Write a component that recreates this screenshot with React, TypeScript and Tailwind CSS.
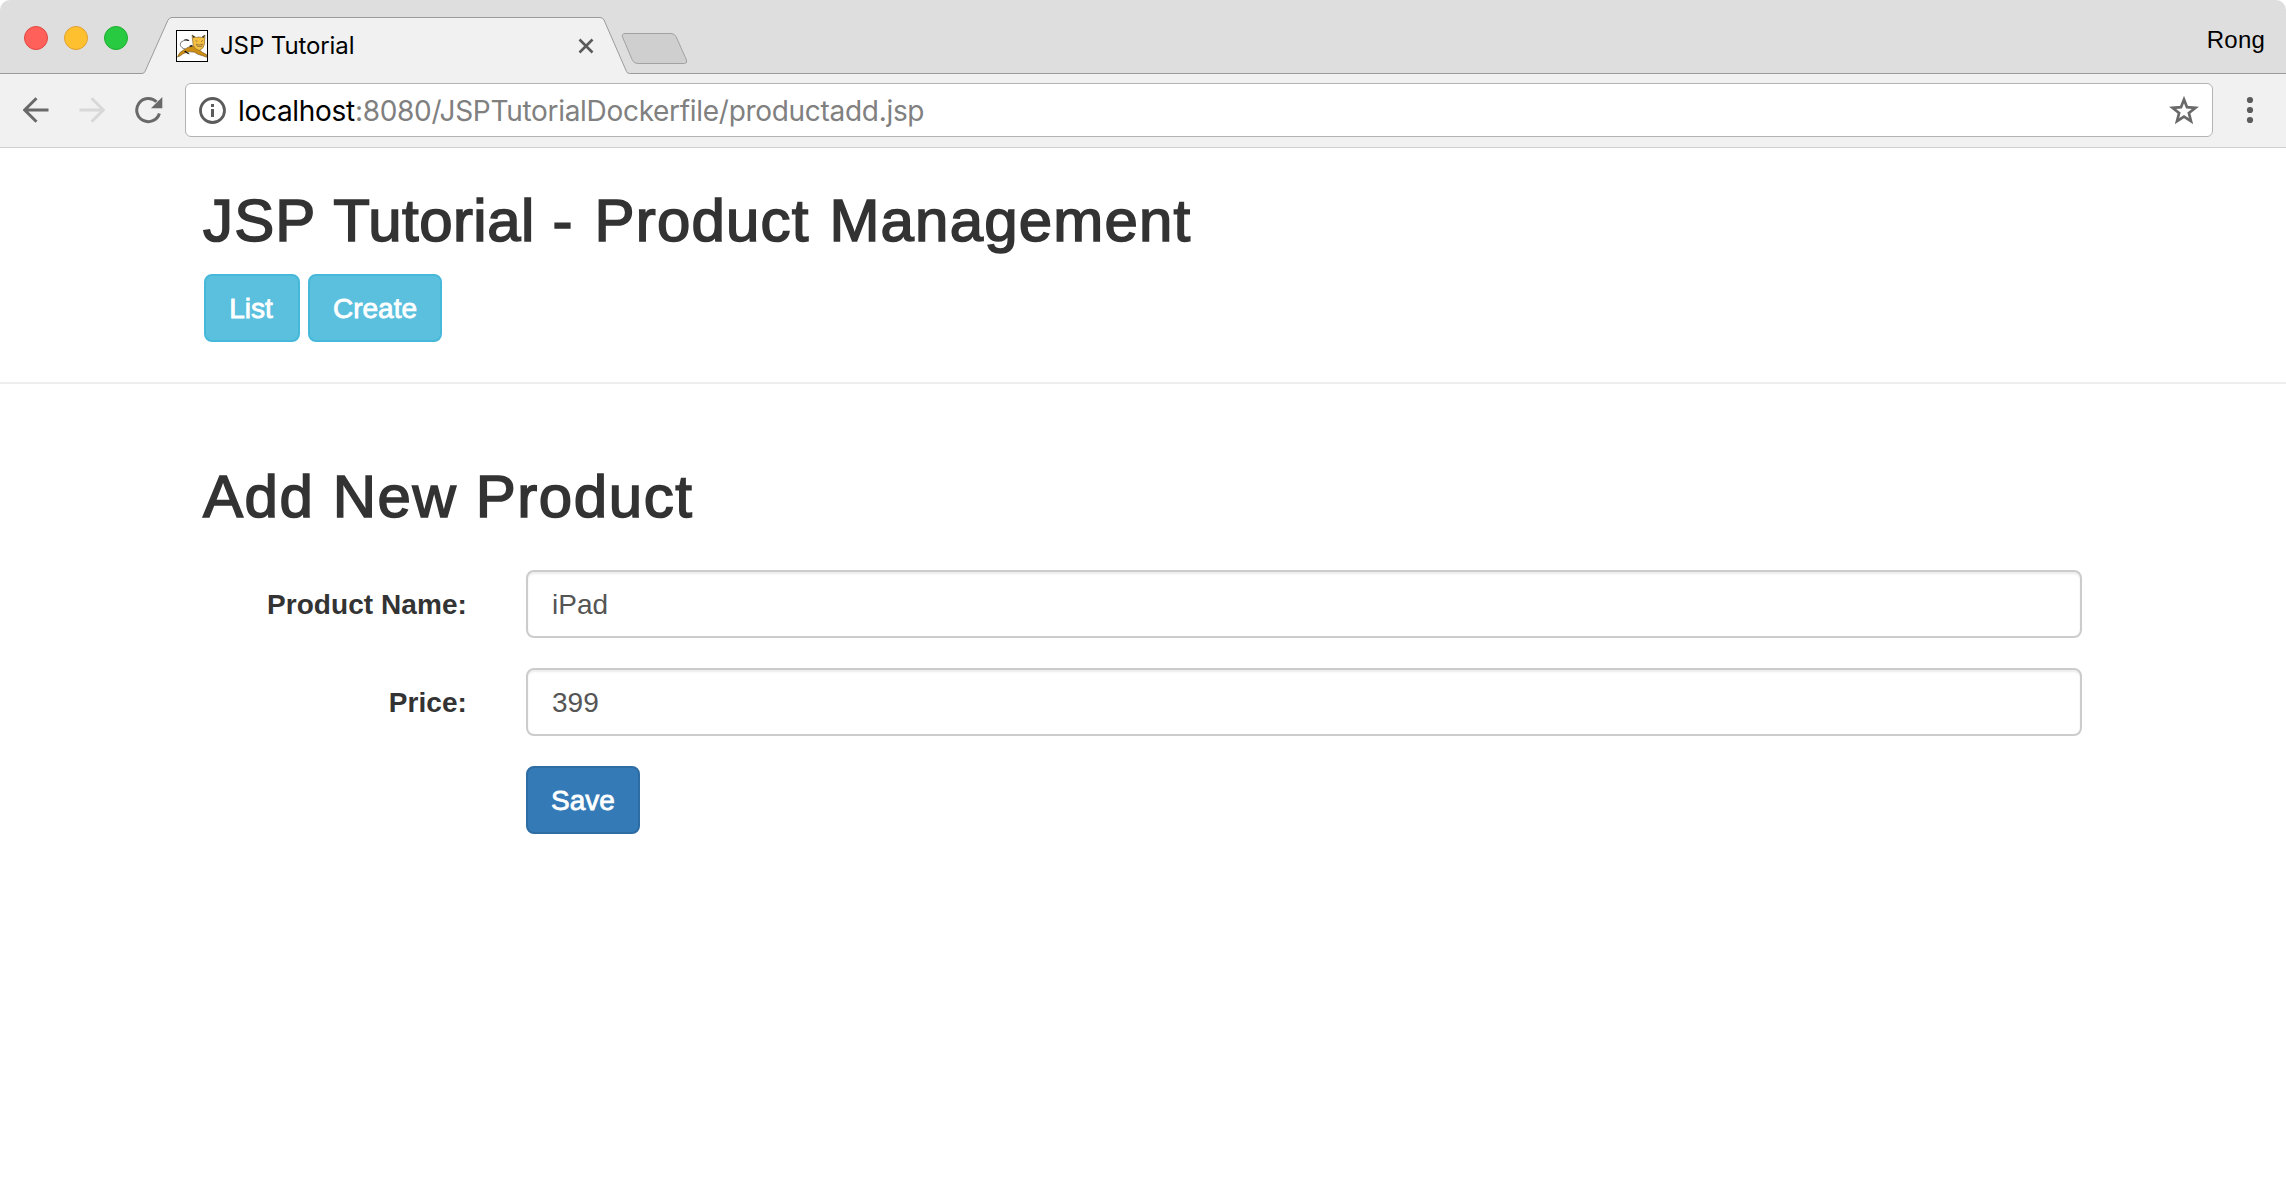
import React from "react";

function TabStrip() {
  return (
    <div className="relative flex h-[74px] items-start overflow-hidden rounded-t-[10px] bg-[#dedede]">
      <div className="flex gap-4 pt-[26px] pl-6">
        <span className="size-6 rounded-full border border-[#e2463f] bg-[#ff605a]" />
        <span className="size-6 rounded-full border border-[#e0a030] bg-[#ffc02f]" />
        <span className="size-6 rounded-full border border-[#1dad2c] bg-[#28ca41]" />
      </div>
      <svg className="absolute inset-0" width="2286" height="74" viewBox="0 0 2286 74" fill="none">
        <path
          d="M-1 73.5H142q2 0 3-2L168 20q1.500-2.500 4-2.500H600q3 0 4 2.500L626.500 71.500q1 2 3 2H2287V75H-1z"
          fill="#f1f1f1"
          stroke="#9b9b9b"
        />
        <path
          d="M625 33.500H671q3.500 0 5 3L686.500 60q1 3.500-2 3.500H638q-4 0-5.500-3L622.500 37q-1-3.500 2.500-3.500z"
          fill="#cfcfcf"
          stroke="#a2a2a2"
        />
      </svg>
      <div className="relative ml-[48px] flex w-[460px] items-center pt-[30px]">
        <TomcatIcon />
        <span className="ml-3 font-[Inter,sans-serif] text-[24px] leading-8 tracking-[-0.1px] text-black">JSP Tutorial</span>
        <svg className="ml-auto mr-[42px]" width="16" height="16" viewBox="0 0 16 16" stroke="#5a5a5a" strokeWidth="2.600">
          <path d="M1.500 1.500l13 13M14.500 1.500l-13 13" />
        </svg>
      </div>
      <span className="ml-auto pt-[24px] pr-[21px] font-['Liberation_Sans',sans-serif] text-[24px] leading-8 tracking-[0.2px] text-black">Rong</span>
    </div>
  );
}

function TomcatIcon() {
  return (
    <svg width="32" height="32" viewBox="0 0 32 32">
      <rect x=".5" y=".5" width="31" height="31" fill="#fff" stroke="#000" />
      <path d="M9 19C4 18 3 13 6 11.500c2-1.300 4-1.500 6-1" fill="none" stroke="#555" strokeWidth=".8" />
      <path d="M7.500 10q3-1.600 6 .3l-1 .8q-2-1-5-1.100z" fill="#111" />
      <path d="M1.500 27q1.500-5 6-7Q12 16.500 17 16l5.500 3q3 3.500 8 5.500l.3 2.700-4.300-1.500q-5-1-8-3.500-5-1-9 .5Q6 24 4 26z" fill="#cf8f14" stroke="#6b5326" strokeWidth=".6" />
      <path d="M8 21.500l4 2.500 2 .3-4.500-3.500zM13 16l2.500-1 1.500 1-2.500 1z" fill="#111" />
      <path d="M16 5l4 2.500q3-1 5.500 0L29 5l-.5 9q-.8 4.500-5 6.500-4.500-.6-6.300-5z" fill="#f6c043" stroke="#70551b" strokeWidth=".6" />
      <path d="M16 5l1.300 3 2-1zM29 5l-1.300 3-2-1z" fill="#333" />
      <path d="M19.500 10l2 2M27 10l-2 2M20 14l3 1 3.500-1-1 2.500h-4z" stroke="#8a7038" strokeWidth=".7" fill="#e0b04a" />
    </svg>
  );
}

function Toolbar() {
  return (
    <div className="flex h-[74px] items-start border-b border-[#d0d0d0] bg-[#f1f1f1] pt-[9px]">
      <div className="flex h-[54px] w-[185px] shrink-0 items-center">
        <svg className="ml-[23px]" width="26" height="26" viewBox="0 0 26 26" fill="none" stroke="#696969" strokeWidth="3">
          <path d="M25.500 13H2M13.500 1.200L1.700 13l11.800 11.800" />
        </svg>
        <svg className="ml-[30px]" width="26" height="26" viewBox="0 0 26 26" fill="none" stroke="#d8d8d8" strokeWidth="3">
          <path d="M.5 13H24M12.500 1.200L24.300 13 12.500 24.800" />
        </svg>
        <svg className="ml-[30px]" width="28" height="28" viewBox="0 0 28 28" fill="none">
          <path d="M21.500 5.800A11.600 11.600 0 1 0 24.400 17.500" stroke="#696969" strokeWidth="3" />
          <path d="M27.300 1v11.300H16z" fill="#696969" />
        </svg>
      </div>
      <div className="flex h-[54px] w-[2028px] items-center rounded-[6px] border border-[#b3b3b3] bg-white">
        <svg className="ml-[13px]" width="27" height="27" viewBox="0 0 27 27" fill="none">
          <circle cx="13.500" cy="13.500" r="12" stroke="#5c5c5c" strokeWidth="2.800" />
          <path d="M13.500 7v3M13.500 12v8" stroke="#5c5c5c" strokeWidth="3" />
        </svg>
        <span className="ml-[12px] pt-[2px] font-[Inter,sans-serif] text-[28px] leading-9 tracking-[-0.3px] text-[#808080]">
          <span className="text-black">localhost</span>:8080/JSPTutorialDockerfile/productadd.jsp
        </span>
        <svg className="mr-[13px] ml-auto" width="30" height="28" viewBox="0 0 30 28" fill="none" stroke="#696969" strokeWidth="2.700">
          <path d="M15 3.500l3 7.700 8.500.6-6.600 5.200 2.100 8.200L15 20.700l-7 4.500 2.100-8.200-6.600-5.200 8.500-.6z" />
        </svg>
      </div>
      <svg className="mt-[13px] ml-[33px]" width="8" height="28" viewBox="0 0 8 28" fill="#5c5c5c">
        <circle cx="4" cy="4" r="3.100" />
        <circle cx="4" cy="14" r="3.100" />
        <circle cx="4" cy="24" r="3.100" />
      </svg>
    </div>
  );
}

const headingClass =
  "-ml-px whitespace-nowrap text-[60px] leading-[66px] font-normal [-webkit-text-stroke:1.600px_#333]";
const buttonClass =
  "flex h-[68px] items-center justify-center rounded-[8px] border-2 pt-[2px] text-[28px] text-white [-webkit-text-stroke:0.800px_#fff]";

function Field({ label, value }: { label: string; value: string }) {
  return (
    <div className="flex items-center">
      <label className="w-[263px] pt-[2px] text-right font-bold tracking-[0.070px]">{label}</label>
      <input
        defaultValue={value}
        className="ml-[59px] h-[68px] w-[1556px] rounded-[8px] border-2 border-[#ccc] bg-white px-6 pt-[2px] text-[28px] text-[#555] shadow-[inset_0_2px_2px_rgba(0,0,0,0.075)] outline-none"
      />
    </div>
  );
}

export default function App() {
  return (
    <div className="h-[1184px] w-[2286px] overflow-hidden bg-white font-['Liberation_Sans',Arial,sans-serif] text-[28px] text-[#333]">
      <TabStrip />
      <Toolbar />
      <header className="border-b-2 border-[#eee] pt-[40px] pb-[40px] pl-[204px]">
        <h2 className={`${headingClass} tracking-[1.170px]`}>
          JSP <span className="tracking-[0.450px]">Tutorial</span> <span className="mr-[3px]">-</span> Product{" "}
          <span className="ml-[2px]">Management</span>
        </h2>
        <div className="mt-[20px] flex gap-2">
          <button className={`${buttonClass} w-[96px] border-[#46b8da] bg-[#5bc0de] pr-[2px]`}>List</button>
          <button className={`${buttonClass} w-[134px] border-[#46b8da] bg-[#5bc0de]`}>Create</button>
        </div>
      </header>
      <main className="pt-[80px] pl-[204px]">
        <h2 className={`${headingClass} tracking-[1.570px]`}>Add New Product</h2>
        <form className="mt-[40px] flex flex-col gap-[30px]" onSubmit={(e) => e.preventDefault()}>
          <Field label="Product Name:" value="iPad" />
          <Field label="Price:" value="399" />
          <button className={`${buttonClass} ml-[322px] w-[114px] border-[#2e6da4] bg-[#337ab7]`}>Save</button>
        </form>
      </main>
    </div>
  );
}
